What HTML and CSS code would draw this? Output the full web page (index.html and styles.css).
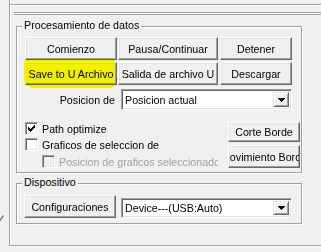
FILE: index.html
```html
<!DOCTYPE html>
<html>
<head>
<meta charset="utf-8">
<link rel="stylesheet" href="styles.css">
</head>
<body>
<svg class="edge-mark" width="4" height="6" viewBox="0 0 4 6"><path d="M0 5.5 L3.5 0.5" stroke="#5a5a5a" stroke-width="1.2" fill="none"/></svg>
<div class="shell">
  <div class="topline"></div>
  <div class="rule"></div>

  <div class="group g1">
    <span class="gtitle">Procesamiento de datos</span>
    <div class="btnrow">
      <div class="btn w1">Comienzo</div>
      <div class="btn w2">Pausa/Continuar</div>
      <div class="btn w3">Detener</div>
    </div>
    <div class="btnrow r2">
      <div class="btn w1">Save to U Archivo</div>
      <div class="btn w2">Salida de archivo U</div>
      <div class="btn w3">Descargar</div>
    </div>
    <div class="posrow">
      <span class="poslabel">Posicion de</span>
      <div class="combo c1">
        <span class="combo-text">Posicion actual</span>
        <span class="combo-btn"><svg width="7" height="4" viewBox="0 0 7 4" shape-rendering="crispEdges"><path d="M0 0h7v1h-7z M1 1h5v1h-5z M2 2h3v1h-3z M3 3h1v1h-1z" fill="#000"/></svg></span>
      </div>
    </div>
    <div class="lower">
      <div class="checks">
        <div class="chk">
          <span class="box"><svg width="7" height="7" viewBox="0 0 7 7" shape-rendering="crispEdges"><path d="M6 0h1v1h-1z M5 1h2v1h-2z M0 2h1v1h-1z M4 2h3v1h-3z M0 3h2v1h-2z M3 3h3v1h-3z M0 4h5v1h-5z M1 5h3v1h-3z M2 6h1v1h-1z" fill="#000"/></svg></span>
          <span>Path optimize</span>
        </div>
        <div class="chk c2">
          <span class="box"></span>
          <span>Graficos de seleccion de</span>
        </div>
        <div class="chk dis">
          <span class="box"></span>
          <span class="dislabel">Posicion de graficos seleccionados</span>
        </div>
      </div>
      <div class="side">
        <div class="btn b-corte">Corte Borde</div>
        <div class="btn b-mov"><span>Movimiento Borde</span></div>
      </div>
    </div>
    <div class="hilite"></div>
  </div>

  <div class="group g2">
    <span class="gtitle">Dispositivo</span>
    <div class="devrow">
      <div class="btn w1 cfg">Configuraciones</div>
      <div class="combo c2">
        <span class="combo-text">Device---(USB:Auto)</span>
        <span class="combo-btn"><svg width="7" height="4" viewBox="0 0 7 4" shape-rendering="crispEdges"><path d="M0 0h7v1h-7z M1 1h5v1h-5z M2 2h3v1h-3z M3 3h1v1h-1z" fill="#000"/></svg></span>
      </div>
    </div>
  </div>
</div>
</body>
</html>
```

FILE: styles.css
```css
* { box-sizing: border-box; }
html, body { margin: 0; height: 100%; }
body {
  background: #f0f0f0;
  font-family: "Liberation Sans", Arial, sans-serif;
  font-size: 10.7px;
  color: #000;
  overflow: hidden;
  position: relative;
}
.edge-mark { position: absolute; left: 0; top: 215px; }

.shell {
  margin-left: 9px;
  height: 246px;
  border-left: 1px solid #a0a0a0;
  border-bottom: 1px solid #a0a0a0;
  box-shadow: inset 1px 0 #fff, 0 1px #fff;
  padding-top: 4px;
}
.topline {
  height: 2px;
  border-top: 1px solid #a0a0a0;
  border-bottom: 1px solid #fff;
}
.rule {
  margin: 6px 0 0 4px;
  height: 3px;
  border-top: 1px solid #a0a0a0;
  border-bottom: 1px solid #a0a0a0;
  background: #fff;
}

.group {
  position: relative;
  width: 286px;
  border: 1px solid #a0a0a0;
  box-shadow: inset 1px 1px #fff, 1px 1px #fff;
}
.gtitle {
  position: absolute;
  left: 5px;
  top: -8px;
  padding: 0 2px;
  line-height: 13px;
  background: #f0f0f0;
  white-space: nowrap;
}
.g1 { margin: 11px 0 0 6px; height: 147px; padding: 10px 0 0 8px; }
.g2 { margin: 10px 0 0 6px; height: 41px; padding: 11px 0 0 7px; }

.btn {
  display: flex;
  align-items: center;
  justify-content: center;
  border: 1px solid;
  border-color: #fff #696969 #696969 #fff;
  box-shadow: inset -1px -1px #a0a0a0, inset 1px 1px #e3e3e3;
  background: #f0f0f0;
  white-space: nowrap;
  overflow: hidden;
}
.btnrow { display: flex; height: 23px; }
.btnrow.r2 { margin-top: 2px; }
.w1 { width: 92px; }
.w2 { width: 100px; margin-left: 1px; }
.w3 { width: 72px; margin-left: 2px; }

.posrow { display: flex; margin-top: 4px; height: 21px; }
.poslabel { width: 96px; text-align: right; padding-right: 6px; padding-top: 5px; }

.combo {
  display: flex;
  width: 171px;
  border: 1px solid;
  border-color: #a0a0a0 #fff #fff #a0a0a0;
  box-shadow: inset 1px 1px #696969, inset -1px -1px #e3e3e3;
  background: #fff;
  padding: 2px;
}
.combo.c1 { height: 21px; }
.combo-text { flex: 1; display: flex; align-items: center; padding-left: 1px; white-space: nowrap; overflow: hidden; }
.combo-btn {
  width: 16px;
  display: flex;
  align-items: center;
  justify-content: center;
  border: 1px solid;
  border-color: #e3e3e3 #696969 #696969 #e3e3e3;
  box-shadow: inset 1px 1px #fff, inset -1px -1px #a0a0a0;
  background: #f0f0f0;
}

.lower { display: flex; margin-top: 12px; }
.checks { flex: 1; min-width: 0; }
.chk { display: flex; align-items: center; height: 13px; white-space: nowrap; }
.chk.c2 { margin-top: 3px; }
.chk.dis { margin-top: 4px; margin-left: 17px; color: #a0a0a0; }
.box {
  width: 13px;
  height: 13px;
  flex: none;
  margin-right: 4px;
  display: flex;
  align-items: center;
  justify-content: center;
  border: 1px solid;
  border-color: #a0a0a0 #fff #fff #a0a0a0;
  box-shadow: inset 1px 1px #696969, inset -1px -1px #e3e3e3;
  background: #fff;
}
.dis .box { background: #f0f0f0; }
.dislabel { width: 159px; flex: none; overflow: hidden; }

.side { width: 72px; margin-right: 1px; flex: none; }
.b-corte { height: 20px; }
.b-mov { height: 23px; margin-top: 3px; }

.hilite {
  position: absolute;
  left: 7px;
  top: 32px;
  width: 91px;
  height: 29px;
  background: #ffff00;
  mix-blend-mode: multiply;
  border-radius: 5px 3px 6px 10px / 4px 3px 5px 8px;
}

.devrow { display: flex; }
.cfg { height: 23px; }
.combo.c2 { height: 20px; margin: 3px 0 0 5px; }
.cfg.w1 { width: 92px; margin-left: 0; }
```
